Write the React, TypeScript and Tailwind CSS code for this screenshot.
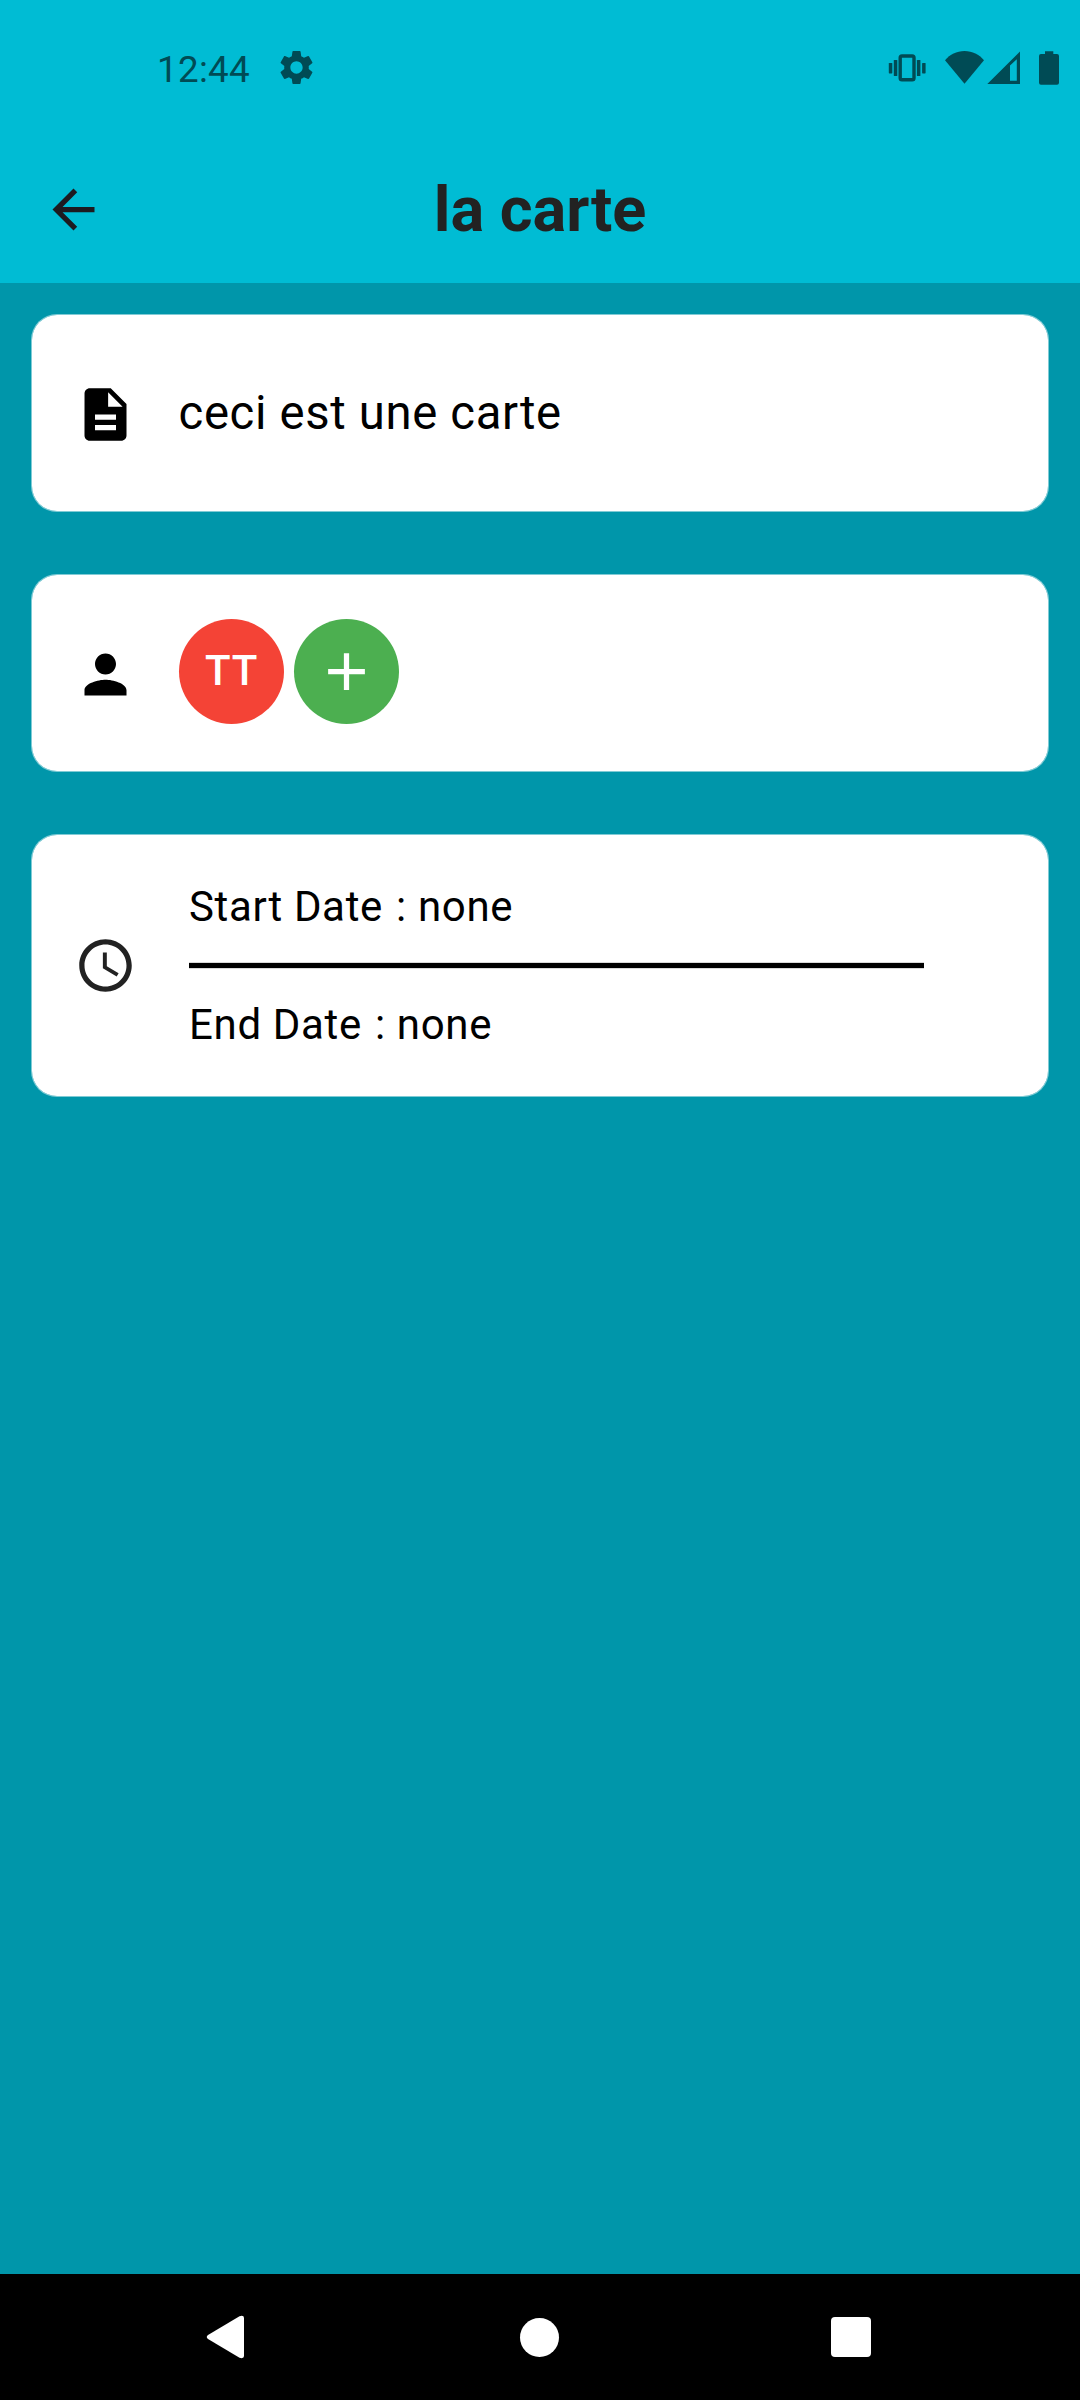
import type { ReactNode } from "react";
import { MdSettings, MdArrowBack, MdDescription, MdPerson, MdAdd, MdAccessTime } from "react-icons/md";

function StatusIcons() {
  return (
    <svg width="180" height="40" viewBox="885 48 180 40" fill="currentColor">
      <rect x="900.2" y="56" width="13.8" height="23.8" rx="1.8" fill="none" stroke="currentColor" strokeWidth="3.4" />
      <rect x="893.8" y="60" width="3.5" height="16" rx="0.6" />
      <rect x="888.8" y="63" width="3.5" height="10.4" rx="0.6" />
      <rect x="916.9" y="60" width="3.5" height="16" rx="0.6" />
      <rect x="922.1" y="63" width="3.5" height="10.4" rx="0.6" />
      <path d="M964.5 83.7 945 60.2C950 54.5 956.5 51 964.5 51S979 54.5 984 60.2Z" />
      <path fillRule="evenodd" d="M1020 51.5V84H987.3ZM1010 65.6V80.7H1016.8V59.2Z" />
      <path d="M1045 51.2h8.3v2.8h3.7q2 0 2 2v26.8q0 2-2 2h-16q-2 0-2-2V56q0-2 2-2h4Z" />
    </svg>
  );
}

function Card({ icon, className, children }: { icon: ReactNode; className: string; children: ReactNode }) {
  return (
    <section className={`flex items-center rounded-[26px] border border-white/50 bg-white bg-clip-padding pl-[42px] ${className}`}>
      <div className="w-[104.5px] shrink-0 text-[63px]">{icon}</div>
      {children}
    </section>
  );
}

function DateRow({ label }: { label: string }) {
  return (
    <p>
      {label}
      <span className="ml-[2px]"> : none</span>
    </p>
  );
}

export default function App() {
  return (
    <div className="flex h-[2400px] w-[1080px] flex-col bg-[#0096aa] font-['Roboto',sans-serif] text-black">
      <header className="h-[283px] shrink-0 bg-[#00bcd4]">
        <div className="flex h-[136px] items-center pl-[157px] text-[#004b55]">
          <span className="mt-[3px] w-[119px] text-[36.75px] leading-[44px] tracking-[0.3px]">12:44</span>
          <MdSettings className="mb-px size-[41px]" />
          <div className="ml-auto pr-[15px]">
            <StatusIcons />
          </div>
        </div>
        <div className="grid h-[147px] grid-cols-[1fr_auto_1fr] items-center">
          <MdArrowBack className="ml-[42px] size-[63px] text-[#1d1b20]" />
          <h1 className="text-[63px] leading-[74px] font-bold text-[#222222]">la carte</h1>
        </div>
      </header>

      <main className="flex flex-1 flex-col gap-[63px] px-[31px] pt-[31px]">
        <Card className="h-[198px]" icon={<MdDescription className="mt-[3px]" />}>
          <p className="text-[47.25px] leading-[55px] tracking-[0.66px]">ceci est une carte</p>
        </Card>

        <Card className="-mt-px h-[198px]" icon={<MdPerson className="mt-[3px]" />}>
          <div className="mb-[3px] flex gap-[10.5px]">
            <div className="flex size-[105px] items-center justify-center rounded-full bg-[#f44336] pb-[2px] pl-px text-[42px] leading-[50px] font-medium tracking-[0.66px] text-white">
              TT
            </div>
            <div className="flex size-[105px] items-center justify-center rounded-full bg-[#4caf50] text-[63px] text-white">
              <MdAdd />
            </div>
          </div>
        </Card>

        <Card className="-mt-px h-[263px]" icon={<MdAccessTime className="text-[#222222]" />}>
          <div className="ml-[10.5px] w-[735px] text-[42px] leading-[50px] tracking-[0.66px]">
            <DateRow label="Start Date" />
            <div className="mt-[30px] mb-[31px] h-[7px] border-y border-[#d9d9d9] bg-black" />
            <DateRow label="End Date" />
          </div>
        </Card>
      </main>

      <nav className="flex h-[126px] shrink-0 items-center bg-black pl-[206px] text-white">
        <svg width="38" height="44" viewBox="0 0 38 44" fill="currentColor">
          <path d="M2 20 33.5 1.2Q38 0 38 3V41Q38 44 33.5 42.8L2 24Q-.5 22 2 20Z" />
        </svg>
        <div className="ml-[276px] size-[39px] rounded-full bg-white" />
        <div className="ml-[272px] size-[40px] rounded-[4px] bg-white" />
      </nav>
    </div>
  );
}
